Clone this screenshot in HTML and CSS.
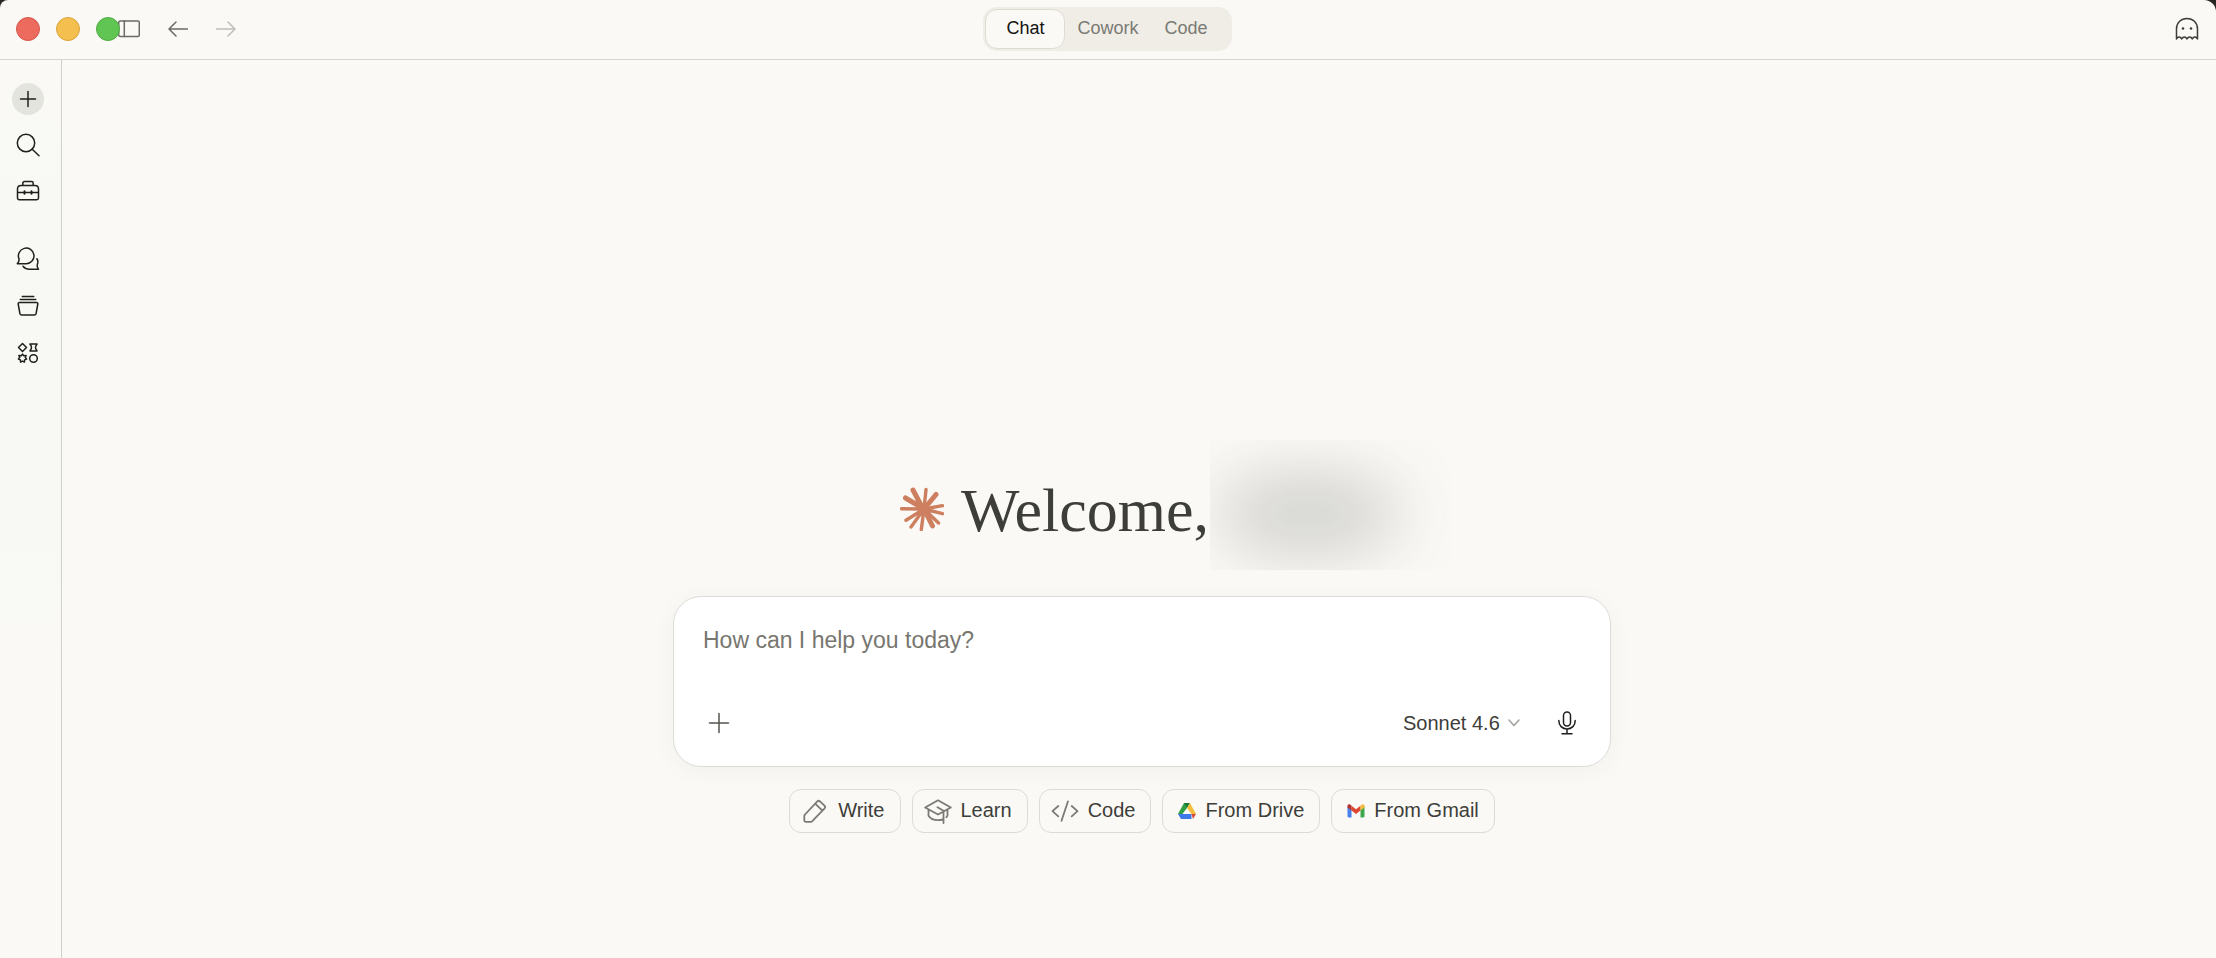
FILE: index.html
```html
<!DOCTYPE html>
<html lang="en">
<head>
  <meta charset="UTF-8" />
  <title>Chat</title>
  <link rel="stylesheet" href="styles.css">
</head>
<body>
  <div class="window">
    <header class="titlebar">
      <div class="titlebar-left">
        <div class="lights">
          <span class="light red"></span>
          <span class="light yellow"></span>
          <span class="light green"></span>
        </div>
        <button class="nav-btn toggle" aria-label="Toggle sidebar">
          <svg width="22" height="18" viewBox="0 0 22 18"><rect x="0.7" y="1" width="20.6" height="15.5" rx="1.5"/><path d="M6.3 1v15.5"/></svg>
        </button>
        <button class="nav-btn" aria-label="Back">
          <svg width="20" height="18" viewBox="0 0 20 18"><path d="M19.5 9H1M8 2L1 9l7 7"/></svg>
        </button>
        <button class="nav-btn disabled" aria-label="Forward" disabled>
          <svg width="20" height="18" viewBox="0 0 20 18"><path d="M.5 9H19M12 2l7 7-7 7"/></svg>
        </button>
      </div>

      <nav class="modes">
        <button class="mode active">Chat</button>
        <button class="mode">Cowork</button>
        <button class="mode">Code</button>
      </nav>

      <div class="titlebar-right">
        <button class="nav-btn ghost" aria-label="Incognito chat">
          <svg width="24" height="24" viewBox="0 0 24 24"><path d="M1.500 22V12C1.500 5.500 6.200 1.500 12 1.500S22.500 5.500 22.500 12v10c-1.300-2.600-4-2.600-5.200 0-1.300-2.600-4-2.600-5.300 0-1.300-2.600-4-2.600-5.300 0-1.200-2.600-3.900-2.600-5.200 0z"/><circle class="dot" cx="8" cy="11.500" r="1.300"/><circle class="dot" cx="16" cy="11.500" r="1.300"/></svg>
        </button>
      </div>
    </header>

    <div class="body">
      <aside class="sidebar">
        <button class="side-btn new" aria-label="New chat">
          <svg width="24" height="24" viewBox="0 0 24 24"><path d="M12 4.500v15M4.500 12h15"/></svg>
        </button>
        <button class="side-btn" aria-label="Search">
          <svg width="24" height="24" viewBox="0 0 24 24"><circle cx="10" cy="10" r="8.700"/><path d="M16.200 16.200L23 22.700"/></svg>
        </button>
        <button class="side-btn" aria-label="Customize">
          <svg width="24" height="24" viewBox="0 0 24 24"><path d="M6.800 6.500V4.200c0-1 .7-1.700 1.700-1.700h7c1 0 1.700.7 1.700 1.700v2.300M1.500 10c0-2 1.500-3.500 3.500-3.500h14c2 0 3.500 1.500 3.500 3.500v9c0 1-.7 1.700-1.700 1.700H3.200c-1 0-1.700-.7-1.700-1.700zM1.500 13.500h21"/><path class="thick" d="M8.500 12.300v2.400M15.500 12.300v2.400"/></svg>
        </button>

        <div class="side-group">
          <button class="side-btn" aria-label="Chats">
            <svg width="24" height="24" viewBox="0 0 24 24"><path d="M1.300 16.700h8.900a7.800 7.800 0 1 0-7.200-4.800c.4 1.500-.5 3.300-1.700 4.800z"/><path d="M7 19.200c1.800 2.300 4 3 6.500 3h9c-1-1.300-1.700-2.500-1.300-4.200.9-2.200.9-4.500-.3-6.300"/></svg>
          </button>
          <button class="side-btn" aria-label="Projects">
            <svg width="24" height="24" viewBox="0 0 24 24"><path d="M6.300 2.500h11.400M4.300 5.500h15.400M3.500 8.500h17c1 0 1.500.6 1.300 1.500l-1.700 9.500c-.2.900-.8 1.500-1.800 1.500H5.700c-1 0-1.600-.6-1.800-1.500L2.200 10c-.2-.9.3-1.500 1.300-1.500z"/></svg>
          </button>
          <button class="side-btn" aria-label="Artifacts">
            <svg width="24" height="24" viewBox="0 0 24 24"><path d="M6.500 2.500l4 4-4 4-4-4zM14 3h7c0 1-1.500 1.300-1.500 3.500S21 9 21 10h-7c0-1 1.500-1.300 1.500-3.500S14 4 14 3zM6.500 13.100l1.300 1.700 2.300-.3-.8 2.100 1.300 1.500-2 .8-.2 2.200-1.900-1-1.900 1-.2-2.200-2-.8 1.300-1.500-.8-2.100 2.300.3z"/><circle cx="17.500" cy="17.500" r="3.800"/></svg>
          </button>
        </div>
      </aside>

      <main class="main">
        <div class="column">
          <h1 class="greeting">
            <svg class="burst" width="44" height="44" viewBox="0 0 44 44">
              <path class="wide" d="M23 22L13 3M24 22L36 7.500M24 22L5.500 11M24 22l8.500 17"/>
              <path d="M24 22l2-19.500M24 22l18.500-3.300M24 22l18.500 4.700M24 22l14.500 14M24 22l-2.700 20.500M24 22L11 40M24 22L6 33.300M24 22L1.500 21.700"/>
            </svg>
            <span class="hello">Welcome,</span>
            <span class="redacted"></span>
          </h1>

          <form class="composer">
            <textarea class="prompt" rows="1" aria-label="Message" placeholder="How can I help you today?"></textarea>
            <div class="tools">
              <button type="button" class="tool-btn" aria-label="Add files">
                <svg width="24" height="24" viewBox="0 0 24 24"><path d="M12 2.500v19M2.500 12h19"/></svg>
              </button>
              <label class="model">
                <select aria-label="Model">
                  <option>Sonnet 4.6</option>
                </select>
                <svg width="12" height="8" viewBox="0 0 12 8"><path d="M1 1l5 5.500L11 1"/></svg>
              </label>
              <button type="button" class="tool-btn mic" aria-label="Dictate">
                <svg width="24" height="24" viewBox="0 0 24 24"><rect x="8.500" y="1" width="7" height="14" rx="3.500"/><path d="M3.800 9.500c0 5 3.500 8.500 8.200 8.500s8.200-3.500 8.200-8.500M12 18v4.500M7 22.700h10"/></svg>
              </button>
            </div>
          </form>

          <div class="chips">
            <button class="chip">
              <svg width="28" height="28" viewBox="0 0 28 28"><path d="M4 17.500L16.300 4.400c.7-.8 1.800-.8 2.600-.1l4.600 4.400c.8.7.8 1.800.1 2.600L11.300 24.200c-.4.400-.8.600-1.300.600H4.500c-.7 0-1.200-.5-1.200-1.200v-4.500c0-.6.2-1.100.7-1.600zM14.200 6.600l7.200 7"/></svg>
              Write
            </button>
            <button class="chip">
              <svg width="28" height="28" viewBox="0 0 28 28"><path d="M1.200 10.500L14 3.300l12.800 7.200L14 17.500zM4.500 12.500v6.200c2.200 3.400 5.500 4.500 9.500 4.500 2 0 3.700-.4 5.200-1.100M23.500 12.500v6.200l-1.200 1.500M13.500 10.200l6 3.500v12.300"/></svg>
              Learn
            </button>
            <button class="chip">
              <svg width="28" height="28" viewBox="0 0 28 28"><path d="M7.300 9L1.500 14.200l5.800 5.200M20.700 9l5.800 5.200-5.800 5.200M17 4.300l-6.500 19.500"/></svg>
              Code
            </button>
            <button class="chip brand">
              <svg width="18" height="18" viewBox="0 0 18 18">
                <path fill="#2f9e44" d="M6 1h3v5L4.400 12H0z"/>
                <path fill="#1d7a35" d="M6 1h6L9 6z"/>
                <path fill="#f6bd3b" d="M12 1l6 11h-4.500L9 6z"/>
                <path fill="#3d78ea" d="M0 12h13.500v5H3z"/>
                <path fill="#dc4937" d="M13.500 12H18l-3 5z"/>
                <path fill="#faf9f5" d="M9 6.500l3.200 5.500H5.800z"/>
              </svg>
              From Drive
            </button>
            <button class="chip brand">
              <svg width="18" height="18" viewBox="0 0 18 18">
                <path fill="#4a80ec" d="M.5 4l4 3v8.500H1.700c-.7 0-1.200-.5-1.200-1.200z"/>
                <path fill="#3fa750" d="M17.500 4l-4 3v8.500h2.800c.7 0 1.200-.5 1.200-1.200z"/>
                <path fill="#dc4937" d="M4.500 3.800L9 7.300l4.500-3.500v4.800L9 12 4.500 8.600z"/>
                <path fill="#b8302a" d="M.5 4c0-1.700 1.800-2.300 3-1.200l1 1v4.800L.5 5.600z"/>
                <path fill="#f6bd3b" d="M17.500 4c0-1.700-1.800-2.300-3-1.200l-1 1v4.800l4-3z"/>
              </svg>
              From Gmail
            </button>
          </div>
        </div>
      </main>
    </div>
  </div>
</body>
</html>
```
FILE: styles.css
```css
* {
  box-sizing: border-box;
}
body {
  margin: 0;
  background: #262624;
  color: #3d3d3a;
  font-family: "Liberation Sans", Arial, sans-serif;
  font-size: 20px;
}
button {
  padding: 0;
  border: none;
  background: none;
  color: inherit;
  font: inherit;
  cursor: pointer;
}
svg {
  display: block;
  flex: none;
  fill: none;
  stroke: currentColor;
  stroke-width: 1.5;
  stroke-linecap: round;
  stroke-linejoin: round;
}
.window {
  display: flex;
  flex-direction: column;
  min-height: 100vh;
  background: #faf9f5;
  border-radius: 8px 12px 0 0;
}

/* title bar */
.titlebar {
  display: grid;
  grid-template-columns: 1fr auto 1fr;
  align-items: center;
  height: 60px;
  padding: 0 17px 2px 16px;
  border-bottom: 1px solid #d6d5d0;
}
.titlebar-left {
  display: flex;
  align-items: center;
}
.lights {
  display: flex;
  gap: 16px;
  z-index: 1;
}
.light {
  width: 24px;
  height: 24px;
  border: 1px solid;
  border-radius: 50%;
}
.red {
  background: #ec6a5e;
  border-color: #d5564b;
}
.yellow {
  background: #f4bf4f;
  border-color: #d9a33c;
}
.green {
  background: #61c554;
  border-color: #4fab42;
}
.nav-btn {
  color: #6b6a65;
}
.nav-btn + .nav-btn {
  margin-left: 28px;
}
.toggle {
  margin-left: -2px;
}
.disabled {
  color: #bfbeb8;
}
.titlebar-right {
  display: flex;
  justify-content: flex-end;
}
.ghost {
  color: #3d3d3a;
}
.dot {
  fill: currentColor;
  stroke: none;
}
.modes {
  display: flex;
  height: 44px;
  padding: 2px 10px 2px 2px;
  background: #efede6;
  border-radius: 14px;
  font-size: 18px;
}
.mode {
  padding: 0 14px 0 12px;
  color: #7b7a74;
}
.mode.active {
  padding: 0 20px;
  border: 1px solid #dddbd4;
  border-radius: 12px;
  background: #faf9f5;
  color: #141413;
}

/* sidebar */
.body {
  display: flex;
  flex: 1;
}
.sidebar {
  display: flex;
  flex-direction: column;
  align-items: center;
  gap: 14px;
  width: 62px;
  padding: 23px 6px 0 0;
  border-right: 1px solid #d0d0cb;
  background: linear-gradient(#faf9f5, #f8f9f4 25%, #f8f9f4 40%, #faf9f5 70%);
}
.side-group {
  display: flex;
  flex-direction: column;
  gap: 15px;
  margin-top: 22px;
}
.side-btn {
  display: flex;
  align-items: center;
  justify-content: center;
  width: 32px;
  height: 32px;
  border-radius: 50%;
  color: #1f1f1d;
}
.new {
  background: #e4e4df;
}
.thick {
  stroke-width: 2;
}

/* start screen */
.main {
  display: flex;
  flex: 1;
  flex-direction: column;
  align-items: center;
  padding: 4px 16px 0 22px;
}
.main::before {
  content: "";
  flex: 3;
}
.main::after {
  content: "";
  flex: 1;
}
.column {
  width: 100%;
  max-width: 938px;
}
.greeting {
  display: flex;
  align-items: center;
  justify-content: center;
  height: 130px;
  margin: 0 0 26px;
  font-family: "Liberation Serif", "Times New Roman", serif;
  font-size: 62px;
  font-weight: 400;
}
.burst {
  margin: 8px 17px 0 0;
  color: #cd7f5f;
  stroke-width: 3.4;
}
.wide {
  stroke-width: 5;
}
.hello {
  padding-top: 12px;
}
/* hidden user name, may run past the centred line */
.redacted {
  position: relative;
  overflow: hidden;
  width: 240px;
  height: 130px;
  margin: 0 -66px 0 1px;
}
.redacted::before {
  content: "";
  position: absolute;
  top: 32px;
  left: 4px;
  width: 188px;
  height: 84px;
  border-radius: 50%;
  background: rgba(61, 61, 58, 0.2);
  filter: blur(32px);
}
.composer {
  padding: 27px 21px 21px;
  background: #fff;
  border: 1px solid #dcdcd9;
  border-radius: 28px;
  box-shadow: 0 4px 24px rgba(0, 0, 0, 0.04);
}
.prompt {
  display: block;
  width: 100%;
  height: 50px;
  padding: 0 8px;
  border: none;
  outline: none;
  resize: none;
  background: none;
  color: #3d3d3a;
  font: inherit;
  font-size: 23px;
  line-height: 32px;
}
.prompt::placeholder {
  color: #77766f;
}
.tools {
  display: flex;
  align-items: center;
  margin-top: 27px;
  padding-left: 2px;
}
.tool-btn {
  display: flex;
  align-items: center;
  justify-content: center;
  width: 44px;
  height: 44px;
  color: #55544f;
}
.mic {
  color: #1f1f1d;
}
.model {
  position: relative;
  margin: 0 13px 0 auto;
}
.model select {
  height: 44px;
  padding: 0 32px 0 12px;
  border: none;
  outline: none;
  appearance: none;
  background: none;
  color: #3d3d3a;
  font: inherit;
}
.model svg {
  position: absolute;
  top: 18px;
  right: 12px;
  color: #a3a29c;
  pointer-events: none;
}
.chips {
  display: flex;
  flex-wrap: wrap;
  justify-content: center;
  gap: 11px;
  margin-top: 22px;
}
.chip {
  display: flex;
  align-items: center;
  gap: 9px;
  height: 44px;
  padding: 0 15px 0 11px;
  border: 1px solid #dcdbd5;
  border-radius: 12px;
}
.chip svg {
  color: #7b7a74;
  stroke-width: 1.8;
}
.chip.brand {
  padding-left: 15px;
}
.chip.brand svg {
  stroke: none;
}
```
